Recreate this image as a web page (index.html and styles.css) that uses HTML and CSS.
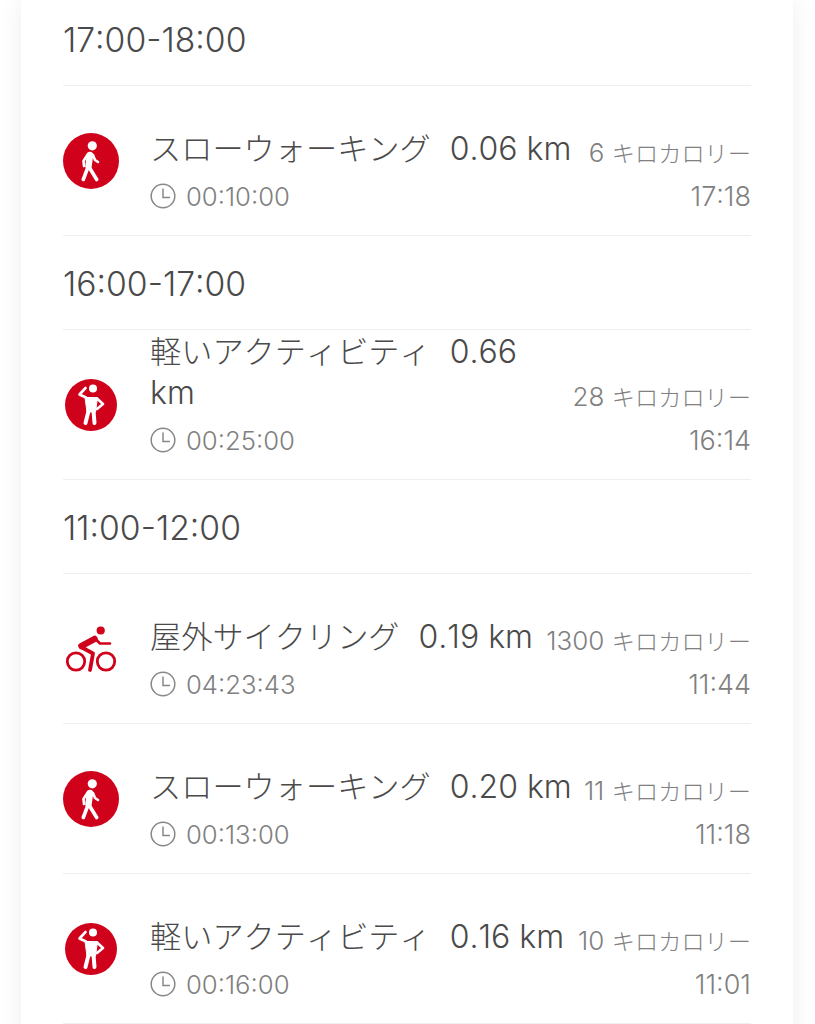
FILE: index.html
```html
<!DOCTYPE html>
<html lang="ja">
<head>
<meta charset="utf-8">
<title>Activity log</title>
<link rel="stylesheet" href="styles.css">
</head>
<body>
<svg class="defs" width="0" height="0" aria-hidden="true">
  <defs>
    <symbol id="i-walk" viewBox="0 0 56 56">
      <circle cx="28" cy="28" r="28" fill="#d0021b"/>
      <circle cx="29.3" cy="12.8" r="4.6" fill="#fff"/>
      <path d="M27 22 L25.5 33" stroke="#fff" stroke-width="6.5" stroke-linecap="round" fill="none"/>
      <path d="M26 34 L33.7 46.5" stroke="#fff" stroke-width="3.6" stroke-linecap="round" fill="none"/>
      <path d="M25 34 L20.3 46.5" stroke="#fff" stroke-width="3.6" stroke-linecap="round" fill="none"/>
      <path d="M25 21 L20.5 28 L21 33" stroke="#fff" stroke-width="2.6" stroke-linecap="round" stroke-linejoin="round" fill="none"/>
      <path d="M30 22 L32 27 L35 29" stroke="#fff" stroke-width="2.6" stroke-linecap="round" stroke-linejoin="round" fill="none"/>
    </symbol>
    <symbol id="i-stand" viewBox="0 0 52 52">
      <circle cx="26" cy="26" r="26" fill="#d0021b"/>
      <circle cx="28" cy="9.5" r="4" fill="#fff"/>
      <path d="M20 18.5 H32.5 L30.5 33 H22 Z" fill="#fff" stroke="#fff" stroke-width="1" stroke-linejoin="round"/>
      <path d="M23.5 32 L20.5 44" stroke="#fff" stroke-width="4" stroke-linecap="round" fill="none"/>
      <path d="M28.5 32 L29.5 44" stroke="#fff" stroke-width="4" stroke-linecap="round" fill="none"/>
      <path d="M21 18.5 L14.5 15.5 L20.5 9" stroke="#fff" stroke-width="2.6" stroke-linecap="round" stroke-linejoin="round" fill="none"/>
      <path d="M32 19.5 L38 25 L32 30" stroke="#fff" stroke-width="2.6" stroke-linecap="round" stroke-linejoin="round" fill="none"/>
    </symbol>
    <symbol id="i-bike" viewBox="0 0 52 46">
      <circle cx="35.7" cy="4.5" r="4.1" fill="#d0021b"/>
      <circle cx="11" cy="35.5" r="8.7" fill="none" stroke="#d0021b" stroke-width="2.8"/>
      <circle cx="41" cy="35.5" r="8.7" fill="none" stroke="#d0021b" stroke-width="2.8"/>
      <path d="M16.5 20 L29.5 13" stroke="#d0021b" stroke-width="6.5" stroke-linecap="round" fill="none"/>
      <path d="M30 12.5 L35 17.5 L45 17.5" stroke="#d0021b" stroke-width="2.6" stroke-linecap="round" stroke-linejoin="round" fill="none"/>
      <path d="M17 21.5 L28 27.5 L25 44" stroke="#d0021b" stroke-width="3.8" stroke-linecap="round" stroke-linejoin="round" fill="none"/>
    </symbol>
    <symbol id="i-clock" viewBox="0 0 26 26">
      <circle cx="13" cy="13" r="11.8" fill="none" stroke="#888" stroke-width="1.5"/>
      <path d="M13 5.5 V14.5 H20" fill="none" stroke="#888" stroke-width="1.5"/>
    </symbol>
  </defs>
</svg>

<main class="card">
  <h2 class="hour hour-first">17:00-18:00</h2>
  <article class="row">
    <div class="icon"><svg class="glyph-walk"><use href="#i-walk"/></svg></div>
    <div class="body">
      <div class="top">
        <div class="title">スローウォーキング<span class="dist">&nbsp; 0.06 km</span></div>
        <div class="kcal"><span class="num">6</span> キロカロリー</div>
      </div>
      <div class="bottom">
        <div class="dur"><svg class="clock"><use href="#i-clock"/></svg>00:10:00</div>
        <div class="at">17:18</div>
      </div>
    </div>
  </article>

  <h2 class="hour">16:00-17:00</h2>
  <article class="row">
    <div class="icon"><svg class="glyph-stand"><use href="#i-stand"/></svg></div>
    <div class="body">
      <div class="top">
        <div class="title">軽いアクティビティ<span class="dist">&nbsp; 0.66 km</span></div>
        <div class="kcal"><span class="num">28</span> キロカロリー</div>
      </div>
      <div class="bottom">
        <div class="dur"><svg class="clock"><use href="#i-clock"/></svg>00:25:00</div>
        <div class="at">16:14</div>
      </div>
    </div>
  </article>

  <h2 class="hour">11:00-12:00</h2>
  <article class="row">
    <div class="icon"><svg class="glyph-bike"><use href="#i-bike"/></svg></div>
    <div class="body">
      <div class="top">
        <div class="title">屋外サイクリング<span class="dist">&nbsp; 0.19 km</span></div>
        <div class="kcal"><span class="num">1300</span> キロカロリー</div>
      </div>
      <div class="bottom">
        <div class="dur"><svg class="clock"><use href="#i-clock"/></svg>04:23:43</div>
        <div class="at">11:44</div>
      </div>
    </div>
  </article>
  <article class="row">
    <div class="icon"><svg class="glyph-walk"><use href="#i-walk"/></svg></div>
    <div class="body">
      <div class="top">
        <div class="title">スローウォーキング<span class="dist">&nbsp; 0.20 km</span></div>
        <div class="kcal"><span class="num">11</span> キロカロリー</div>
      </div>
      <div class="bottom">
        <div class="dur"><svg class="clock"><use href="#i-clock"/></svg>00:13:00</div>
        <div class="at">11:18</div>
      </div>
    </div>
  </article>
  <article class="row">
    <div class="icon"><svg class="glyph-stand"><use href="#i-stand"/></svg></div>
    <div class="body">
      <div class="top">
        <div class="title">軽いアクティビティ<span class="dist">&nbsp; 0.16 km</span></div>
        <div class="kcal"><span class="num">10</span> キロカロリー</div>
      </div>
      <div class="bottom">
        <div class="dur"><svg class="clock"><use href="#i-clock"/></svg>00:16:00</div>
        <div class="at">11:01</div>
      </div>
    </div>
  </article>
</main>
</body>
</html>
```
FILE: styles.css
```css
* { box-sizing: border-box; }
html, body { margin: 0; height: 100%; overflow: hidden; background: #fff; }
body {
  font-family: Inter, "Noto Sans CJK JP", sans-serif;
  font-weight: 300;
  font-kerning: none;
  color: #4a4a4a;
}
.defs { display: block; height: 0; }
.card {
  width: 772px;
  margin-left: 21px;
  padding: 0 42px 40px;
  background: #fff;
  box-shadow: 0 0 24px rgba(0, 0, 0, .07);
}
.hour {
  margin: 0;
  height: 94px;
  padding-top: 2px;
  display: flex;
  align-items: center;
  font-size: 33.7px;
  font-weight: 300;
  border-bottom: 1px solid #efefef;
}
.hour-first { height: 86px; padding-top: 0; padding-bottom: 7px; }
.row {
  height: 150px;
  display: flex;
  align-items: center;
  border-bottom: 1px solid #efefef;
}
.icon {
  width: 56px;
  margin-right: 32px;
  flex: none;
  display: flex;
  justify-content: center;
}
.glyph-walk { width: 56px; height: 56px; display: block; }
.glyph-stand { width: 52px; height: 52px; display: block; }
.glyph-bike { width: 52px; height: 46px; display: block; }
.body {
  flex: 1;
  min-width: 0;
  align-self: flex-end;
  padding-bottom: 20px;
}
.top {
  display: flex;
  align-items: flex-end;
  gap: 8px;
}
.title {
  flex: 1;
  min-width: 0;
  font-size: 31.2px;
  line-height: 41px;
  margin-left: -1px;
  margin-bottom: -1px;
}
.dist { font-size: 32px; line-height: 1; margin-left: 1px; }
.kcal {
  flex: none;
  font-size: 23.2px;
  line-height: 30px;
  color: #808080;
  white-space: nowrap;
}
.num { font-size: 26px; line-height: 1; margin-right: 1px; }
.bottom {
  margin-top: 8px;
  display: flex;
  justify-content: space-between;
  align-items: center;
  height: 38px;
  font-size: 25.7px;
  color: #808080;
}
.dur { display: flex; align-items: center; gap: 10px; margin-left: -1px; }
.at { font-size: 27px; }
.clock { width: 26px; height: 26px; display: block; flex: none; }
```
